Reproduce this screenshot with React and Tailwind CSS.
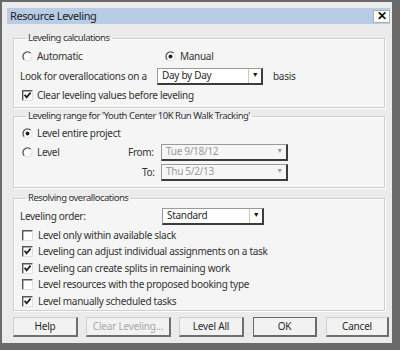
import React from "react";

const F = { fontFamily: '"Noto Sans", "Open Sans", sans-serif' };

function Radio({ checked }) {
  return (
    <svg width="11" height="11" viewBox="0 0 11 11" className="shrink-0">
      <circle cx="5.5" cy="5.5" r="4.5" fill="#ffffff" />
      <path d="M8.7 2.3 A4.5 4.5 0 0 0 2.3 8.7" fill="none" stroke="#555" strokeWidth="1.3" />
      <path d="M2.3 8.7 A4.5 4.5 0 0 0 8.7 2.3" fill="none" stroke="#dcdcdc" strokeWidth="1" />
      {checked && <circle cx="5.5" cy="5.5" r="2" fill="#222" />}
    </svg>
  );
}

function Check({ checked }) {
  return (
    <svg width="11" height="11" viewBox="0 0 11 11" className="shrink-0">
      <rect x="0.5" y="0.5" width="10" height="10" fill="#fff" />
      <path d="M0.7 10.5 V0.7 H10.5" fill="none" stroke="#555" strokeWidth="1.4" />
      <path d="M1 10.5 H10.5 V1" fill="none" stroke="#e0e0e0" strokeWidth="1" />
      {checked && (
        <path d="M2.6 4.8 L4.6 7.4 L8.6 2.6" fill="none" stroke="#222" strokeWidth="1.8" />
      )}
    </svg>
  );
}

function Select({ value, width, disabled }) {
  return (
    <div
      className={`flex h-[17px] shrink-0 items-stretch border-l border-t border-[#9a9a9a] border-r-2 border-b-2 border-r-[#3c3c3c] border-b-[#3c3c3c] ${
        disabled ? "bg-[#f6f6f6]" : "bg-white"
      }`}
      style={{ width }}
    >
      <div
        className={`flex flex-1 items-center pl-[4px] text-[10px] ${
          disabled ? "text-[#9a9a9a]" : "text-[#2a2a2a]"
        }`}
      >
        {value}
      </div>
      <div
        className={`flex w-[13px] items-center justify-center text-[7px] ${
          disabled ? "text-[#9a9a9a]" : "border-l border-[#c8c8c8] text-[#111]"
        }`}
      >
        ▼
      </div>
    </div>
  );
}

function Group({ title, children, className }) {
  return (
    <fieldset
      className={`ml-[6px] mr-[5px] border border-[#cfcfcf] bg-[#f5f5f5] pl-[8px] pr-[6px] ${className}`}
      style={{ boxShadow: "inset 1px 1px 0 #ffffff, 1px 1px 0 #ffffff" }}
    >
      <legend className="ml-[4px] px-[2px] text-[9.5px] leading-[12px] tracking-[-0.5px] text-[#333]">
        {title}
      </legend>
      {children}
    </fieldset>
  );
}

function Btn({ children, w, disabled, def }) {
  return (
    <div
      className={`flex h-[20px] shrink-0 items-center justify-center bg-[#f2f2f2] text-[10px] tracking-[-0.2px] ${
        disabled ? "text-[#a8a8a8]" : "text-[#2a2a2a]"
      } ${
        def
          ? "border border-[#6a6a6a] border-r-2 border-b-2"
          : "border-l border-t border-[#cfcfcf] border-r-2 border-b-2 border-r-[#6e6e6e] border-b-[#6e6e6e]"
      }`}
      style={{ width: w }}
    >
      {children}
    </div>
  );
}

export default function App() {
  const rowCls =
    "flex h-[16.5px] items-center gap-[5px] text-[10px] tracking-[-0.3px] text-[#333]";
  const lineCls = "flex h-[18px] items-center text-[10px] tracking-[-0.3px] text-[#333]";
  return (
    <div
      className="h-[350px] w-[400px] bg-[#6a6a6a] pl-[2px] pt-[2px] pr-[8px] pb-[7px]"
      style={F}
    >
      <div className="flex h-full w-full flex-col bg-[#ebebeb] pl-[5px] pr-[2px] pt-[6px]">
        <div className="flex h-[16px] items-center justify-between bg-[#b8cce6] pl-[3px]">
          <span className="text-[11px] tracking-[-0.4px] text-[#222]">Resource Leveling</span>
          <div className="flex h-[13px] w-[17px] items-center justify-center border border-[#b0b0b0] bg-white text-[12px] font-bold leading-none text-[#111]">
            ✕
          </div>
        </div>

        <Group title="Leveling calculations" className="mt-[8px] h-[76px]">
          <div className={`mt-[3px] ${lineCls}`}>
            <div className="flex w-[143px] shrink-0 items-center gap-[4px]">
              <Radio />
              <span>Automatic</span>
            </div>
            <div className="flex items-center gap-[4px]">
              <Radio checked />
              <span>Manual</span>
            </div>
          </div>
          <div className={`mt-[2px] ${lineCls}`}>
            <span className="-ml-[2px] w-[137px] shrink-0">Look for overallocations on a</span>
            <Select value="Day by Day" width="106px" />
            <span className="ml-[10px]">basis</span>
          </div>
          <div className={`mt-[1px] gap-[4px] ${lineCls}`}>
            <Check checked />
            <span>Clear leveling values before leveling</span>
          </div>
        </Group>

        <Group
          title="Leveling range for 'Youth Center 10K Run Walk Tracking'"
          className="mt-[2px] h-[78px]"
        >
          <div className={`mt-[2px] gap-[4px] ${lineCls}`}>
            <Radio checked />
            <span>Level entire project</span>
          </div>
          <div className={`mt-[1px] ${lineCls}`}>
            <div className="flex w-[106px] shrink-0 items-center gap-[4px]">
              <Radio />
              <span>Level</span>
            </div>
            <span className="w-[33px] shrink-0">From:</span>
            <Select value="Tue 9/18/12" width="127px" disabled />
          </div>
          <div className={`mt-[2px] ${lineCls}`}>
            <span className="ml-[120px] w-[19px] shrink-0">To:</span>
            <Select value="Thu 5/2/13" width="127px" disabled />
          </div>
        </Group>

        <Group title="Resolving overallocations" className="mt-[4px] h-[119px]">
          <div className={`mt-[3px] ${lineCls}`}>
            <span className="-ml-[2px] w-[142px] shrink-0">Leveling order:</span>
            <Select value="Standard" width="102px" />
          </div>
          <div className="mt-[2px]">
            <div className={rowCls}>
              <Check />
              <span>Level only within available slack</span>
            </div>
            <div className={rowCls}>
              <Check checked />
              <span>Leveling can adjust individual assignments on a task</span>
            </div>
            <div className={rowCls}>
              <Check checked />
              <span>Leveling can create splits in remaining work</span>
            </div>
            <div className={rowCls}>
              <Check />
              <span>Level resources with the proposed booking type</span>
            </div>
            <div className={rowCls}>
              <Check checked />
              <span>Level manually scheduled tasks</span>
            </div>
          </div>
        </Group>

        <div className="ml-[6px] mt-[6px] flex items-center">
          <Btn w="65px">Help</Btn>
          <div className="w-[8px]" />
          <Btn w="85px" disabled>Clear Leveling...</Btn>
          <div className="w-[8px]" />
          <Btn w="65px">Level All</Btn>
          <div className="w-[9px]" />
          <Btn w="64px" def>OK</Btn>
          <div className="w-[9px]" />
          <Btn w="63px">Cancel</Btn>
        </div>
      </div>
    </div>
  );
}
